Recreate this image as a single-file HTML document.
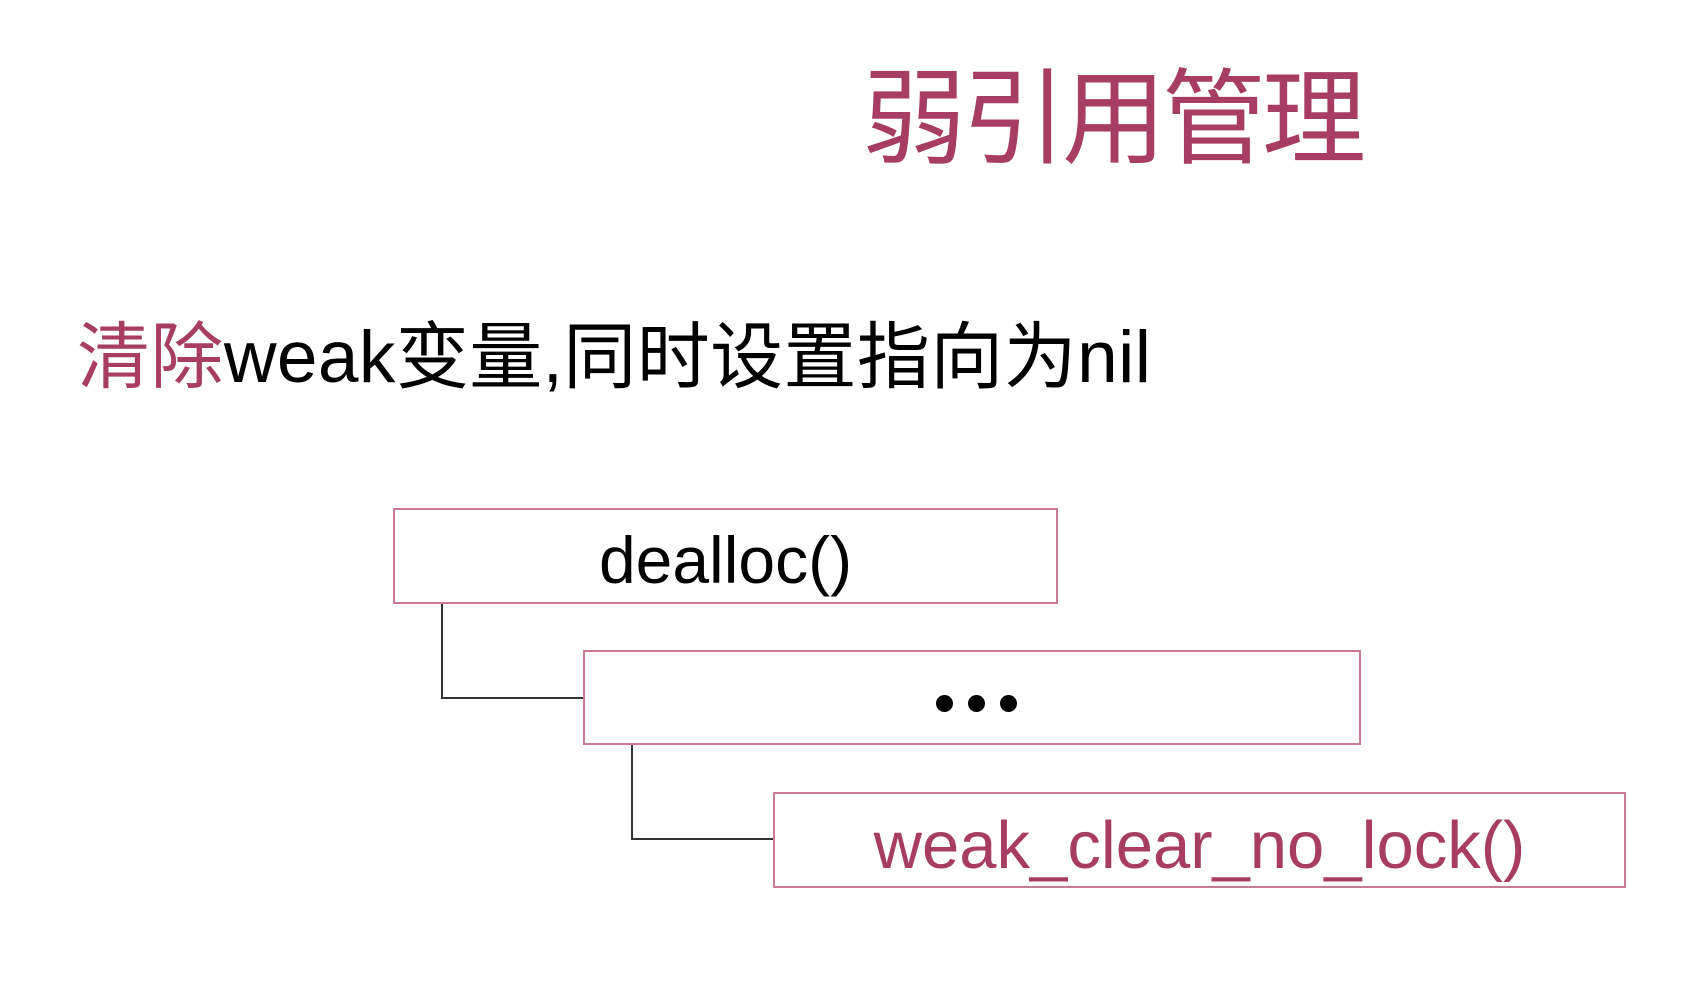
<!DOCTYPE html>
<html><head><meta charset="utf-8"><style>
html,body{margin:0;padding:0;background:#fff;width:1696px;height:1000px;overflow:hidden;position:relative}
.t{position:absolute;white-space:nowrap;line-height:1}
.box{position:absolute;border:2px solid #c97a93;box-sizing:border-box;background:#fff}
.ln{position:absolute;background:#333}
.dot{position:absolute;width:17px;height:17px;border-radius:50%;background:#000}
</style></head><body>
<div class="t" style="left:862px;top:68px;font-size:104px;letter-spacing:-4px;color:#a83d63;font-family:'Liberation Sans','Noto Sans CJK SC',sans-serif">弱引用管理</div>
<div class="t" style="left:77px;top:321px;font-size:73px;letter-spacing:0.4px;color:#000;font-family:'Liberation Sans','Noto Sans CJK SC',sans-serif"><span style="color:#a83d63">清除</span>weak变量,同时设置指向为nil</div>

<div class="ln" style="left:441px;top:602px;width:2px;height:97px"></div>
<div class="ln" style="left:441px;top:697px;width:143px;height:2px"></div>
<div class="ln" style="left:631px;top:743px;width:2px;height:97px"></div>
<div class="ln" style="left:631px;top:838px;width:143px;height:2px"></div>

<div class="box" style="left:393px;top:508px;width:665px;height:96px"></div>
<div class="t" style="left:393px;width:665px;text-align:center;top:527px;font-size:66px;font-family:'Liberation Sans',sans-serif;color:#000">dealloc()</div>

<div class="box" style="left:583px;top:650px;width:778px;height:95px"></div>
<div class="dot" style="left:936px;top:695px"></div>
<div class="dot" style="left:968px;top:695px"></div>
<div class="dot" style="left:1000px;top:695px"></div>

<div class="box" style="left:773px;top:792px;width:853px;height:96px"></div>
<div class="t" style="left:773px;width:853px;text-align:center;top:812px;font-size:67px;font-family:'Liberation Sans',sans-serif;color:#a83d63">weak_clear_no_lock()</div>
</body></html>
